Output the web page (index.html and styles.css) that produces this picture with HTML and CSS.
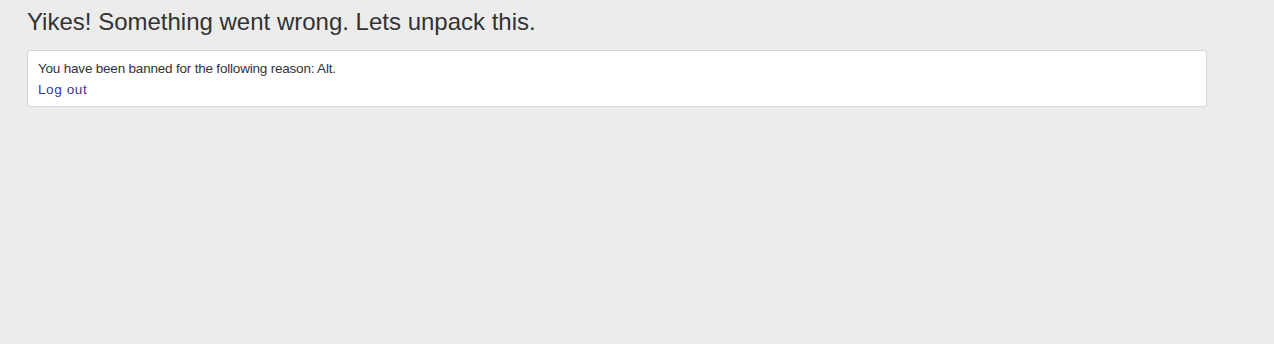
FILE: index.html
```html
<!DOCTYPE html>
<html>
<head>
<meta charset="utf-8">
<link rel="stylesheet" href="styles.css">
</head>
<body>
<main class="page">
  <h1 class="title">Yikes! Something went wrong. Lets unpack this.</h1>
  <div class="card">
    <div class="card-line">You have been banned for the following reason: Alt.</div>
    <a class="card-link" href="#">Log out</a>
  </div>
</main>
</body>
</html>
```
FILE: styles.css
```css
html, body {
  margin: 0;
  padding: 0;
  background: #ececec;
}
body {
  font-family: "Liberation Sans", Arial, sans-serif;
  color: #333333;
}
.page {
  padding: 0 67px 0 27px;
  display: flex;
  flex-direction: column;
}
.title {
  margin: 0;
  padding-top: 8px;
  font-size: 24px;
  font-weight: normal;
  line-height: 28px;
  color: #333333;
}
.card {
  margin-top: 14px;
  background: #ffffff;
  border: 1px solid #d6d6d6;
  border-radius: 3px;
  box-shadow: 0 1px 1px rgba(0,0,0,0.05);
  padding: 7px 10px 6px;
  display: flex;
  flex-direction: column;
  font-size: 13.5px;
  line-height: 21px;
}
.card-line {
  color: #333333;
  letter-spacing: -0.2px;
}
.card-link {
  color: #2e3a96;
  text-decoration: none;
  align-self: flex-start;
  letter-spacing: 0.6px;
}
```
